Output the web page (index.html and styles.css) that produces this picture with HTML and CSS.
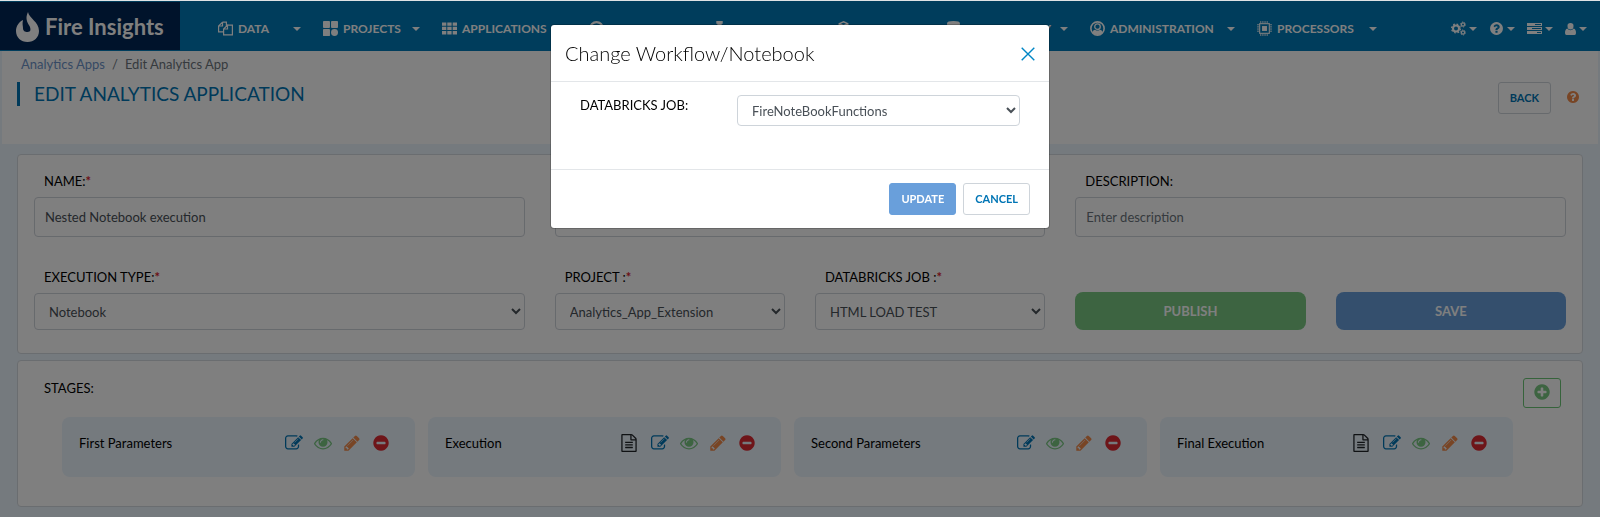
FILE: index.html
```html
<!DOCTYPE html>
<html lang="en">
<head>
<meta charset="utf-8">
<meta name="viewport" content="width=device-width, initial-scale=1">
<title>Fire Insights - Edit Analytics Application</title>
<link rel="stylesheet" href="styles.css">
</head>
<body>
<svg class="sprite" aria-hidden="true">
  <symbol id="pencil" viewBox="0 0 1792 1792"><path d="M491 1536l91-91-235-235-91 91v107h128v128h107zm523-928q0-22-22-22-10 0-17 7l-542 542q-7 7-7 17 0 22 22 22 10 0 17-7l542-542q7-7 7-17zm-54-192l416 416-832 832h-416v-416zm683 96q0 53-37 90l-166 166-416-416 166-165q36-38 90-38 53 0 91 38l235 234q37 39 37 91z"/></symbol>
  <symbol id="eye" viewBox="0 0 1792 1792"><path d="M1664 960q-152-236-381-353 61 104 61 225 0 185-131.500 316.500t-316.500 131.500-316.500-131.500-131.500-316.500q0-121 61-225-229 117-381 353 133 205 333.500 326.500t434.500 121.500 434.500-121.500 333.500-326.500zm-720-384q0-20-14-34t-34-14q-125 0-214.500 89.500t-89.500 214.500q0 20 14 34t34 14 34-14 14-34q0-86 61-147t147-61q20 0 34-14t14-34zm848 384q0 34-20 69-140 230-376.500 368.500t-499.500 138.500-499.500-139-376.500-368q-20-35-20-69t20-69q140-229 376.500-368t499.500-139 499.500 139 376.500 368q20 35 20 69z"/></symbol>
  <symbol id="minus" viewBox="0 0 1792 1792"><path d="M1344 960v-128q0-26-19-45t-45-19h-768q-26 0-45 19t-19 45v128q0 26 19 45t45 19h768q26 0 45-19t19-45zm320-64q0 209-103 385.500t-279.500 279.500-385.500 103-385.500-103-279.500-279.500-103-385.500 103-385.500 279.500-279.500 385.500-103 385.500 103 279.500 279.500 103 385.500z"/></symbol>
  <symbol id="plus" viewBox="0 0 1792 1792"><path d="M1344 960v-128q0-26-19-45t-45-19h-256v-256q0-26-19-45t-45-19h-128q-26 0-45 19t-19 45v256h-256q-26 0-45 19t-19 45v128q0 26 19 45t45 19h256v256q0 26 19 45t45 19h128q26 0 45-19t19-45v-256h256q26 0 45-19t19-45zm320-64q0 209-103 385.500t-279.500 279.500-385.500 103-385.500-103-279.500-279.500-103-385.500 103-385.500 279.500-279.500 385.500-103 385.500 103 279.500 279.500 103 385.500z"/></symbol>
  <symbol id="help" viewBox="0 0 1792 1792"><path d="M1024 1376v-192q0-14-9-23t-23-9h-192q-14 0-23 9t-9 23v192q0 14 9 23t23 9h192q14 0 23-9t9-23zm256-672q0-88-55.500-163t-138.500-116-170-41q-243 0-371 213-15 24 8 42l132 100q7 6 19 6 16 0 25-12 53-68 86-92 34-24 86-24 48 0 85.500 26t37.500 59q0 38-20 61t-68 45q-63 28-115.500 86.500t-52.500 125.500v36q0 14 9 23t23 9h192q14 0 23-9t9-23q0-19 21.500-49.500t54.500-49.500q32-18 49-28.500t46-35 44.500-48 28-60.500 12.500-81zm384 192q0 209-103 385.500t-279.500 279.500-385.500 103-385.500-103-279.500-279.500-103-385.500 103-385.500 279.500-279.500 385.500-103 385.500 103 279.500 279.500 103 385.500z"/></symbol>
  <symbol id="edit" viewBox="0 0 1792 1792"><path d="M888 1184l116-116-152-152-116 116v56h96v96h56zm440-720q-16-16-33 1l-350 350q-17 17-1 33t33-1l350-350q17-17 1-33zm80 594v190q0 119-84.500 203.500t-203.500 84.500h-832q-119 0-203.500-84.500t-84.500-203.500v-832q0-119 84.500-203.500t203.500-84.500h832q63 0 117 25 15 7 18 23 3 17-9 29l-49 49q-14 14-32 8-23-6-45-6h-832q-66 0-113 47t-47 113v832q0 66 47 113t113 47h832q66 0 113-47t47-113v-126q0-13 9-22l64-64q15-15 35-7t20 29zm-96-738l288 288-672 672h-288v-288zm444 132l-92 92-288-288 92-92q28-28 68-28t68 28l152 152q28 28 28 68t-28 68z"/></symbol>
  <symbol id="file" viewBox="0 0 1792 1792"><path d="M1596 380q28 28 48 76t20 88v1152q0 40-28 68t-68 28h-1344q-40 0-68-28t-28-68v-1600q0-40 28-68t68-28h896q40 0 88 20t76 48zm-444-244v376h376q-10-29-22-41l-313-313q-12-12-41-22zm384 1528v-1024h-416q-40 0-68-28t-28-68v-416h-768v1536h1280zm-1024-864q0-14 9-23t23-9h704q14 0 23 9t9 23v64q0 14-9 23t-23 9h-704q-14 0-23-9t-9-23v-64zm736 224q14 0 23 9t9 23v64q0 14-9 23t-23 9h-704q-14 0-23-9t-9-23v-64q0-14 9-23t23-9h704zm0 256q14 0 23 9t9 23v64q0 14-9 23t-23 9h-704q-14 0-23-9t-9-23v-64q0-14 9-23t23-9h704z"/></symbol>
  <symbol id="flame" viewBox="0 0 23 30"><path d="M12 0C13 6 23 10 23 19C23 25.500 18 30 11.500 30C5 30 0 25.500 0 19C0 14 3 10 7 8C6 12 7 14 7 16C7 19 9 20 11.500 20C15 20 15 17 13.500 14C11 10 9 6 12 0Z"/></symbol>
  <symbol id="copy" viewBox="0 0 15 14"><g fill="none" stroke="currentColor" stroke-width="1.200"><path d="M4.500.600H8.400V5M4.500.600.600 4.500V10.400H5.500M4.500.600V4.500H.600"/><path d="M9.500 3.600H14.400V13.400H5.600V7.500L9.500 3.600V7.500H5.600"/></g></symbol>
  <symbol id="tiles" viewBox="0 0 14 14"><rect width="6.500" height="6.500" rx=".8"/><rect x="7.500" width="6.500" height="6.500" rx=".8"/><rect y="7.500" width="6.500" height="6.500" rx=".8"/><circle cx="10.750" cy="10.750" r="3.250"/></symbol>
  <symbol id="grid" viewBox="0 0 15 12"><path d="M0 0h4.300v3.300H0zM5.300 0h4.300v3.300H5.300zM10.700 0H15v3.300h-4.300zM0 4.300h4.300v3.300H0zM5.300 4.300h4.300v3.300H5.300zM10.700 4.300H15v3.300h-4.300zM0 8.600h4.300V12H0zM5.300 8.600h4.300V12H5.300zM10.700 8.600H15V12h-4.300z"/></symbol>
  <symbol id="clock" viewBox="0 0 14 14"><g fill="none" stroke="currentColor" stroke-width="2"><circle cx="7" cy="7" r="6"/><path d="M7 4v3.500H4.500"/></g></symbol>
  <symbol id="flask" viewBox="0 0 14 14"><path d="M4 0h6v2.500H9V5l4 7q.5 2-1 2H2q-1.500 0-1-2l4-7V2.500H4z"/></symbol>
  <symbol id="cube" viewBox="0 0 14 14"><g fill="none" stroke="currentColor" stroke-width="1.300"><path d="M7 .7l4 1.800v4L7 8.300 3 6.500v-4zM3 2.500l4 1.800 4-1.800M7 4.300v4M3 6.500l-2 1V12l3 1.300L7 12l3 1.300 3-1.300V7.500l-2-1"/></g></symbol>
  <symbol id="database" viewBox="0 0 14 14"><path d="M1 2q0-2 6-2t6 2v1.500q0 1.500-6 1.500T1 3.500zM1 5q2 1.500 6 1.500T13 5v3q0 1.500-6 1.500T1 8zM1 9.500Q3 11 7 11t6-1.500V12q0 2-6 2t-6-2z"/></symbol>
  <symbol id="admin" viewBox="0 0 14 14"><circle cx="7" cy="7" r="6.200" fill="none" stroke="currentColor" stroke-width="1.500"/><circle cx="7" cy="5.300" r="2.600" fill="none" stroke="currentColor" stroke-width="1.200"/><path d="M2 10.500q1.500-2.500 3-2.200 2 1 4 0 1.500-.3 3 2.200Q10 13 7 13t-5-2.500z"/></symbol>
  <symbol id="chip" viewBox="0 0 14 14"><g fill="none" stroke="currentColor"><rect x="2.500" y="2.500" width="9" height="9" stroke-width="1"/><path stroke-width=".8" d="M3.500 0v2M5.500 0v2M7.500 0v2M9.500 0v2M3.500 12v2M5.500 12v2M7.500 12v2M9.500 12v2M0 3.500h2M0 5.500h2M0 7.500h2M0 9.500h2M12 3.500h2M12 5.500h2M12 7.500h2M12 9.500h2"/></g><rect x="4.700" y="4.700" width="4.600" height="4.600"/></symbol>
  <symbol id="cogs" viewBox="0 0 15 14"><g fill="none" stroke="currentColor"><circle cx="5" cy="7" r="3" stroke-width="2"/><circle cx="5" cy="7" r="4.400" stroke-width="1.300" stroke-dasharray="1.730 1.730"/><circle cx="12" cy="3" r="1.600" stroke-width="1.200"/><circle cx="12" cy="3" r="2.500" stroke-width=".9" stroke-dasharray="1.300 1.300"/><circle cx="12" cy="11" r="1.600" stroke-width="1.200"/><circle cx="12" cy="11" r="2.500" stroke-width=".9" stroke-dasharray="1.300 1.300"/></g></symbol>
  <symbol id="server" viewBox="0 0 15 11"><path fill-rule="evenodd" d="M0 0h15v3H0zM8 1v1h6V1zM0 4h15v3H0zM5 5v1h9V5zM0 8h15v3H0zM10 9v1h4V9z"/></symbol>
  <symbol id="user" viewBox="0 0 11 12"><path d="M5.500 0a3 3 0 013 3.200Q8.500 6.500 5.500 6.500T2.500 3.200A3 3 0 015.500 0zM2.300 5.500Q3.500 7.300 5.500 7.300T8.700 5.500Q11 6 11 10q0 2-1.500 2h-8Q0 12 0 10q0-4 2.300-4.500z"/></symbol>
  <symbol id="close" viewBox="0 0 14 14"><path d="M.7.700l12.600 12.600M13.300.700.700 13.300" fill="none" stroke="currentColor" stroke-width="1.400"/></symbol>
</svg>

<header class="topbar">
  <a class="brand" href="#"><svg class="flame"><use href="#flame"/></svg>Fire Insights</a>
  <nav class="menu">
    <a class="menu-item" href="#"><svg class="menu-icon"><use href="#copy"/></svg>DATA<i class="caret"></i></a>
    <a class="menu-item" href="#"><svg class="menu-icon"><use href="#tiles"/></svg>PROJECTS<i class="caret"></i></a>
    <a class="menu-item" href="#"><svg class="menu-icon"><use href="#grid"/></svg>APPLICATIONS</a>
    <a class="menu-item" href="#"><svg class="menu-icon"><use href="#clock"/></svg>SCHEDULER</a>
    <a class="menu-item" href="#"><svg class="menu-icon"><use href="#flask"/></svg>EXECUTIONS</a>
    <a class="menu-item" href="#"><svg class="menu-icon"><use href="#cube"/></svg>MODELS</a>
    <a class="menu-item" href="#"><svg class="menu-icon"><use href="#database"/></svg>DATA QUALITY<i class="caret"></i></a>
    <a class="menu-item" href="#"><svg class="menu-icon"><use href="#admin"/></svg>ADMINISTRATION<i class="caret"></i></a>
    <a class="menu-item" href="#"><svg class="menu-icon"><use href="#chip"/></svg>PROCESSORS<i class="caret"></i></a>
  </nav>
  <div class="tools">
    <button class="tool" type="button" aria-label="Settings"><svg class="menu-icon"><use href="#cogs"/></svg><i class="caret"></i></button>
    <button class="tool" type="button" aria-label="Help"><svg class="menu-icon"><use href="#help"/></svg><i class="caret"></i></button>
    <button class="tool" type="button" aria-label="Servers"><svg class="menu-icon"><use href="#server"/></svg><i class="caret"></i></button>
    <button class="tool" type="button" aria-label="User"><svg class="menu-icon menu-icon-slim"><use href="#user"/></svg><i class="caret"></i></button>
  </div>
</header>

<section class="page-head">
  <div class="crumbs"><a href="#">Analytics Apps</a><span>/</span><span>Edit Analytics App</span></div>
  <div class="head-row">
    <h1 class="page-title">EDIT ANALYTICS APPLICATION</h1>
    <button class="btn btn-outline btn-back" type="button">BACK</button>
    <svg class="help-mark"><use href="#help"/></svg>
  </div>
</section>

<main class="content">
  <form class="card form-grid">
    <div class="field wide"><label for="name">NAME:<b>*</b></label><input id="name" type="text" value="Nested Notebook execution"></div>
    <div class="field wide"><label for="category">CATEGORY:</label><input id="category" type="text"></div>
    <div class="field wide"><label for="desc">DESCRIPTION:</label><input id="desc" type="text" placeholder="Enter description"></div>
    <div class="field wide"><label for="type">EXECUTION TYPE:<b>*</b></label><select id="type"><option>Notebook</option></select></div>
    <div class="field"><label for="project">PROJECT :<b>*</b></label><select id="project"><option>Analytics_App_Extension</option></select></div>
    <div class="field"><label for="job">DATABRICKS JOB :<b>*</b></label><select id="job"><option>HTML LOAD TEST</option></select></div>
    <button class="big-btn publish" type="button">PUBLISH</button>
    <button class="big-btn save" type="button">SAVE</button>
  </form>

  <section class="card stages">
    <div class="stages-head">
      <h2 class="stages-title">STAGES:</h2>
      <button class="add-btn" type="button" aria-label="Add stage"><svg class="icon"><use href="#plus"/></svg></button>
    </div>
    <div class="stage-list">
      <article class="stage"><span class="stage-name">First Parameters</span><svg class="icon blue"><use href="#edit"/></svg><svg class="icon green"><use href="#eye"/></svg><svg class="icon orange"><use href="#pencil"/></svg><svg class="icon red"><use href="#minus"/></svg></article>
      <article class="stage"><span class="stage-name">Execution</span><svg class="icon dark"><use href="#file"/></svg><svg class="icon blue"><use href="#edit"/></svg><svg class="icon green"><use href="#eye"/></svg><svg class="icon orange"><use href="#pencil"/></svg><svg class="icon red"><use href="#minus"/></svg></article>
      <article class="stage"><span class="stage-name">Second Parameters</span><svg class="icon blue"><use href="#edit"/></svg><svg class="icon green"><use href="#eye"/></svg><svg class="icon orange"><use href="#pencil"/></svg><svg class="icon red"><use href="#minus"/></svg></article>
      <article class="stage"><span class="stage-name">Final Execution</span><svg class="icon dark"><use href="#file"/></svg><svg class="icon blue"><use href="#edit"/></svg><svg class="icon green"><use href="#eye"/></svg><svg class="icon orange"><use href="#pencil"/></svg><svg class="icon red"><use href="#minus"/></svg></article>
    </div>
  </section>
</main>

<div class="backdrop">
  <div class="modal" role="dialog" aria-modal="true" aria-labelledby="modal-title">
    <div class="modal-head">
      <h2 class="modal-title" id="modal-title">Change Workflow/Notebook</h2>
      <button class="close" type="button" aria-label="Close"><svg><use href="#close"/></svg></button>
    </div>
    <div class="modal-body">
      <label for="modal-job">DATABRICKS JOB:</label>
      <select id="modal-job"><option>FireNoteBookFunctions</option></select>
    </div>
    <div class="modal-foot">
      <button class="btn btn-primary" type="button">UPDATE</button>
      <button class="btn btn-outline" type="button">CANCEL</button>
    </div>
  </div>
</div>
</body>
</html>
```
FILE: styles.css
```css
* { box-sizing: border-box; }

body {
  margin: 0;
  min-height: 100vh;
  border-top: 1px solid #dfe3e5;
  background: #eaf4fd;
  color: #212529;
  font: 13px/20px Lato, "Open Sans", sans-serif;
}

button, input, select { font: inherit; }
button { cursor: pointer; }
a { text-decoration: none; }
svg { display: block; flex: none; fill: currentColor; }
.sprite { position: absolute; width: 0; height: 0; }

/* Top bar */
.topbar {
  display: flex;
  align-items: stretch;
  height: 50px;
  padding: 1px 0;
  background: #007ab8;
  color: #fff;
}
.brand {
  display: flex;
  align-items: center;
  gap: 6px;
  width: 180px;
  padding: 2px 0 0 16px;
  background: #002656;
  color: #fff;
  font-size: 22px;
  font-weight: 700;
}
.flame { width: 23px; height: 30px; }
.menu {
  display: grid;
  grid-template-columns: 83px 97px 125px 101px 102px 88px 122px 145px 120px;
  column-gap: 22px;
  margin-left: 38px;
  padding-top: 5px;
}
.menu-item {
  display: flex;
  align-items: center;
  gap: 5px;
  color: #fff;
  font-size: 12px;
  font-weight: 700;
  white-space: nowrap;
}
.menu-icon { width: 15px; height: 15px; }
.menu-icon-slim { width: 11px; height: 12px; }
.caret {
  margin-left: auto;
  border: 4px solid transparent;
  border-top-color: currentColor;
  border-bottom: 0;
}
.tools {
  display: flex;
  gap: 12px;
  margin-left: auto;
  padding: 5px 13px 0 0;
}
.tool {
  display: flex;
  align-items: center;
  gap: 3px;
  padding: 0;
  border: 0;
  background: none;
  color: #fff;
}

/* Page heading */
.page-head {
  min-height: 93px;
  margin: 0 2px;
  padding: 3px 18px 0 15px;
  background: #fff;
}
.crumbs { display: flex; gap: 7px; padding-left: 4px; color: #6c757d; }
.crumbs a { color: #6d93c8; }
.head-row { display: flex; align-items: flex-start; padding-top: 8px; }
.page-title {
  margin: 0 auto 0 0;
  padding-left: 14px;
  border-left: 3px solid #0075b5;
  color: #0075b5;
  font-size: 19px;
  line-height: 24px;
  font-weight: 400;
}
.btn {
  height: 32px;
  padding: 0 11px;
  border: 1px solid #ced4da;
  border-radius: 3px;
  background: #fff;
  font-size: 11px;
  font-weight: 700;
}
.btn-outline { color: #0075b5; }
.btn-primary { border-color: #699fdb; background: #699fdb; color: #fff; }
.help-mark { width: 14px; height: 14px; margin: 8px 0 0 15px; color: #f08a4b; }

/* Cards */
.content {
  display: grid;
  gap: 6px;
  padding: 10px 17px;
}
.card {
  border: 1px solid #d5dbe0;
  border-radius: 4px;
  background: #fff;
}
.form-grid {
  display: grid;
  grid-template-columns: repeat(6, 1fr);
  column-gap: 30px;
  row-gap: 30px;
  align-items: end;
  padding: 16px 16px 23px;
}
.field { display: grid; gap: 6px; min-width: 0; }
.wide { grid-column: span 2; }
.field label { padding-left: 10px; color: #000; }
.field b { color: #d9232e; font-weight: 700; }
input, select {
  width: 100%;
  min-width: 0;
  border: 1px solid #ced4da;
  border-radius: 4px;
  background: #fff;
  color: #495057;
}
input { height: 40px; padding: 0 10px; }
input::placeholder { color: #6c757d; }
select { height: 37px; padding: 0 10px; }
.big-btn {
  height: 38px;
  border: 0;
  border-radius: 8px;
  color: #fff;
  font-size: 13px;
  font-weight: 700;
}
.publish { background: #7ac883; }
.save { background: #699fdb; }

/* Stages */
.stages { padding: 17px 21px 29px 26px; }
.stages-head { display: flex; justify-content: space-between; }
.stages-title { margin: 0; font-size: 13px; font-weight: 400; color: #000; }
.add-btn {
  display: grid;
  place-items: center;
  width: 38px;
  height: 30px;
  padding: 0 0 2px;
  border: 1px solid #6dc777;
  border-radius: 3px;
  background: #fff;
  color: #7ac883;
}
.stage-list {
  display: grid;
  grid-template-columns: repeat(4, 1fr);
  gap: 13px;
  margin: 9px 48px 0 18px;
}
.stage {
  display: flex;
  align-items: center;
  gap: 11px;
  min-height: 60px;
  padding: 0 25px 8px 17px;
  border-radius: 8px;
  background: #eaf4fd;
}
.stage-name { margin-right: auto; color: #000; }
.icon { width: 18px; height: 18px; }
.blue { color: #0075b5; }
.green { color: #7ac883; }
.orange { color: #f08a4b; }
.red { color: #dc2a32; }
.dark { margin-right: 2px; color: #212529; }

/* Dialog */
.backdrop {
  position: fixed;
  inset: 1px 0 0;
  padding-top: 23px;
  background: rgba(0, 0, 0, .5);
}
.modal {
  width: 500px;
  max-width: 100%;
  margin: 0 auto;
  border: 1px solid rgba(0, 0, 0, .2);
  border-radius: 4px;
  background: #fff;
  background-clip: padding-box;
}
.modal-head {
  display: flex;
  align-items: center;
  justify-content: space-between;
  padding: 15px 14px 14px;
  border-bottom: 1px solid #e3e6e9;
}
.modal-title { margin: 0; font-size: 20px; line-height: 27px; font-weight: 300; color: #000; }
.close { padding: 0; border: 0; background: none; color: #0086c5; }
.close svg { width: 14px; height: 14px; }
.modal-body {
  display: grid;
  grid-template-columns: 157px 283px;
  align-items: start;
  min-height: 87px;
  padding: 13px 29px;
}
.modal-body select { height: 31px; }
.modal-body label { color: #000; }
.modal-foot {
  display: flex;
  justify-content: flex-end;
  gap: 7px;
  padding: 13px 19px;
  border-top: 1px solid #e3e6e9;
}
```
